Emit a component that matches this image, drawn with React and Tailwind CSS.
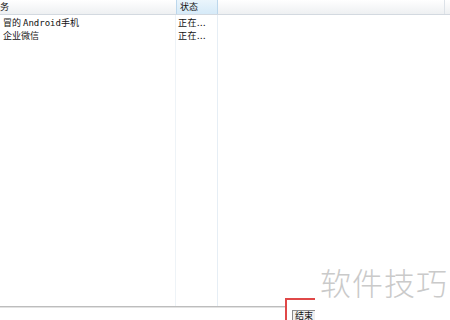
export default function App() {
  const font = { fontFamily: '"Noto Sans CJK SC", "DejaVu Sans", sans-serif' };
  const mono = { fontFamily: '"DejaVu Sans Mono", "Liberation Mono", monospace' };
  const rows = [
    { name: <>冒的 <span style={mono}>Android</span>手机</>, status: "正在..." },
    { name: "企业微信", status: "正在..." },
  ];
  return (
    <div className="relative w-[450px] h-[320px] overflow-hidden bg-white text-[9px] text-[#111]" style={font}>
      <div className="flex flex-col h-[306px]">
        <div className="flex h-[15px] bg-gradient-to-b from-white to-[#eef0f2] border-b border-[#d3d9e0]">
          <div className="w-[176px] leading-[14px] pl-0">务</div>
          <div className="relative w-[42px] bg-gradient-to-b from-[#eaf5fc] to-[#d6eaf8] border-x border-[#bcd7ec] leading-[14px] pl-[3px]">
            状态
            <div className="absolute left-[19px] -top-[3px] w-0 h-0 border-x-[3px] border-x-transparent border-b-[3px] border-b-[#8aa5bd]"></div>
          </div>
          <div className="w-[227px] border-r border-[#dde2e8]"></div>
        </div>
        <div className="flex flex-1">
          <div className="w-[176px] pt-[1px] border-r border-[#eef3f7]">
            {rows.map((r, i) => (
              <div key={i} className="h-[13px] leading-[13px] pl-[3px] whitespace-nowrap">{r.name}</div>
            ))}
          </div>
          <div className="w-[42px] pt-[1px] border-r border-[#e6eef5]">
            {rows.map((r, i) => (
              <div key={i} className="h-[13px] leading-[13px] pl-[2px] tracking-[0.5px]">{r.status}</div>
            ))}
          </div>
          <div className="flex-1"></div>
        </div>
      </div>
      <div className="h-[2px] w-[286px] border-t border-[#bdbdbd] bg-[#e2e2e2]"></div>
      <div className="absolute left-[285px] top-[298px] w-[40px] h-[30px] border-t-2 border-l-2 border-[#e04848]">
        <div className="mt-[10px] ml-[5px] h-[12px] w-[30px] border border-[#8a8a8a] bg-[#f0f0f0] text-[9px] leading-[10px] pl-[2px]">结束</div>
      </div>
      <div className="absolute left-[315px] top-[298px] w-[140px] h-[25px] bg-white"></div>
      <div className="absolute left-[320px] top-[264px] text-[31px] leading-[36px] text-[#cacaca] tracking-[1px] font-light" style={font}>软件技巧</div>
    </div>
  );
}
